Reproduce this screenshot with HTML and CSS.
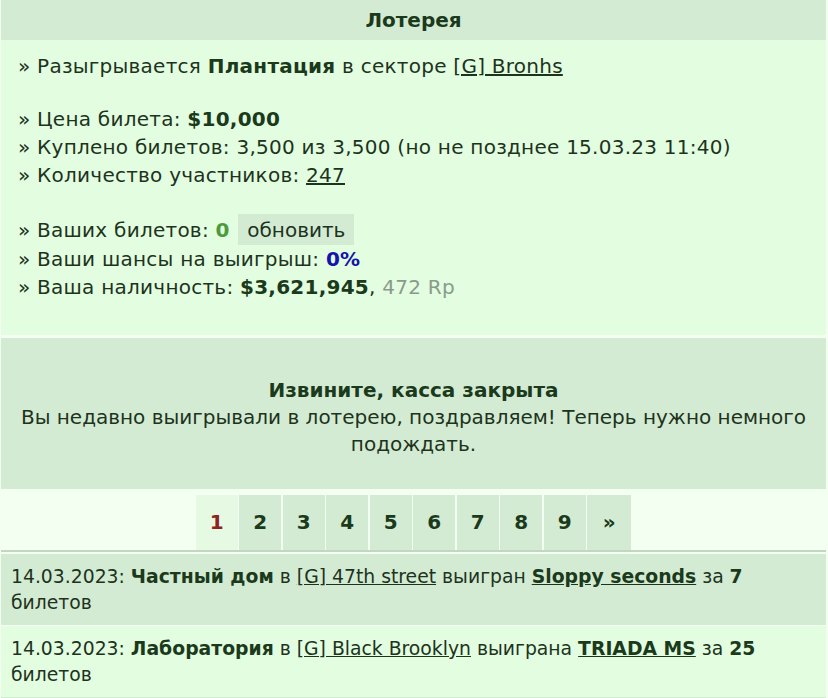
FILE: index.html
```html
<!DOCTYPE html>
<html lang="ru">
<head>
    <meta charset="UTF-8">
    <meta name="viewport" content="width=device-width, initial-scale=1.0">
    <title>Лотерея</title>
    <link rel="stylesheet" href="styles.css">
</head>
<body>
    <div class="page">
        <h2 class="title">Лотерея</h2>

        <div class="info">
            <p>» Разыгрывается <b>Плантация</b> в секторе <a href="#">[G] Bronhs</a></p>
            <p class="gap">» Цена билета: <b>$10,000</b></p>
            <p>» Куплено билетов: 3,500 из 3,500 (но не позднее 15.03.23 11:40)</p>
            <p>» Количество участников: <a href="#">247</a></p>
            <p class="gap">» Ваших билетов: <b class="mine">0</b> <button class="refresh">обновить</button></p>
            <p>» Ваши шансы на выигрыш: <b class="chance">0%</b></p>
            <p>» Ваша наличность: <b>$3,621,945</b>, <span class="rp">472 Rp</span></p>
        </div>

        <div class="closed">
            <b>Извините, касса закрыта</b><br>
            Вы недавно выигрывали в лотерею, поздравляем! Теперь нужно немного подождать.
        </div>

        <div class="pager">
            <span class="current">1</span>
            <a href="#">2</a>
            <a href="#">3</a>
            <a href="#">4</a>
            <a href="#">5</a>
            <a href="#">6</a>
            <a href="#">7</a>
            <a href="#">8</a>
            <a href="#">9</a>
            <a href="#">»</a>
        </div>

        <ul class="history">
            <li>14.03.2023: <b>Частный дом</b> в <a href="#">[G] 47th street</a> выигран <a href="#"><b>Sloppy seconds</b></a> за <b>7</b> билетов</li>
            <li>14.03.2023: <b>Лаборатория</b> в <a href="#">[G] Black Brooklyn</a> выиграна <a href="#"><b>TRIADA MS</b></a> за <b>25</b> билетов</li>
        </ul>
    </div>
</body>
</html>
```

FILE: styles.css
```css
body {
    margin: 0;
    background: #f3fff0;
    font-family: "DejaVu Sans", Verdana, sans-serif;
    font-size: 20px;
    color: #1d331d;
}

.page {
    margin: 0 2px 0 1px;
}

a {
    color: #1d331d;
}

b {
    color: #1b3a1b;
}

.title {
    margin: 0;
    height: 40px;
    line-height: 40px;
    text-align: center;
    font-size: 20px;
    background: #d4ebd3;
    color: #1b3a1b;
}

.info {
    background: #e3fde0;
    padding: 12px 17px 34px;
    letter-spacing: 0.25px;
}

.info p {
    margin: 0;
    line-height: 28px;
}

.info .gap {
    margin-top: 25px;
}

.refresh {
    font: inherit;
    letter-spacing: 0;
    color: #1d331d;
    background: #d4ebd3;
    border: none;
    padding: 0 9px;
    height: 31px;
    margin-left: 2px;
}

.mine {
    color: #4c9a3c;
}

.chance {
    color: #1414a8;
}

.rp {
    color: #8a9a8a;
}

.closed {
    margin-top: 3px;
    background: #d4ebd3;
    text-align: center;
    line-height: 27px;
    padding: 39px 16px 31px;
}

.pager {
    display: flex;
    justify-content: center;
    gap: 1.5px;
    padding: 6px 0 0;
    border-bottom: 2px solid #c3d6c2;
}

.pager a,
.pager .current {
    width: 42px;
    height: 55px;
    line-height: 55px;
    text-align: center;
    font-weight: bold;
    text-decoration: none;
    background: #d4ebd3;
    color: #1b3a1b;
}

.pager .current {
    background: #e6fae3;
    color: #8e2323;
}

.pager a:last-child {
    width: 44px;
}

.history {
    list-style: none;
    margin: 0;
    padding: 0;
    font-size: 18.8px;
}

.history li {
    padding: 10px 10px 9px;
    line-height: 26px;
    margin-top: 1px;
    background: #e3fde0;
}

.history li:first-child {
    background: #d4ebd3;
    margin-top: 2px;
}

.history li:last-child {
    border-bottom: 3px solid #d4ebd3;
}
```
